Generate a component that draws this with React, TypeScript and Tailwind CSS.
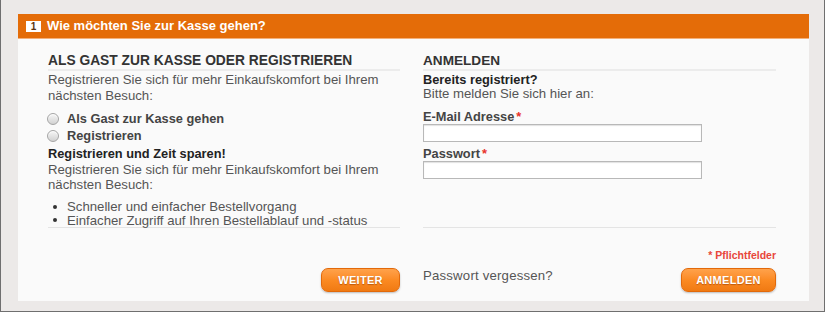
import React from "react";

const bullets = ["Schneller und einfacher Bestellvorgang", "Einfacher Zugriff auf Ihren Bestellablauf und -status"];

function Radio({ label }: { label: string }) {
  return (
    <label className="flex items-center h-[17px]">
      <span className="w-[12px] h-[12px] rounded-full border border-[#a5a5a5] bg-gradient-to-b from-[#f6f6f6] to-[#d2d2d2] shadow-[inset_0_1px_1px_rgba(255,255,255,0.8)] -ml-[1px]" />
      <span className="ml-[8px] font-bold text-[#444] text-[12.8px]">{label}</span>
    </label>
  );
}

function OrangeButton({ label, width }: { label: string; width: string }) {
  return (
    <button
      className={`${width} h-[24px] rounded-[7px] border border-[#e2690a] bg-gradient-to-b from-[#ffa24a] via-[#fb8a22] to-[#f07a12] text-white text-[11px] font-bold tracking-[0.3px] shadow-[0_1px_2px_rgba(0,0,0,0.25)] [text-shadow:0_1px_1px_rgba(150,60,0,0.6)]`}
    >
      {label}
    </button>
  );
}

export default function App() {
  return (
    <div
      className="w-[825px] h-[312px] bg-[#ece9e8] border-x border-b border-[#6f6f6f] pl-[17px] pt-[14px]"
      style={{ fontFamily: '"Liberation Sans", Arial, sans-serif' }}
    >
      <div className="w-[791px] h-[287px] bg-[#fafafa] flex flex-col">
        <div className="h-[25px] bg-[#e46c08] border-b border-[#f3b07a] flex items-center pl-[8px]">
          <span className="w-[15px] h-[11px] bg-white text-[#5a3410] text-[10px] font-bold leading-[11px] flex items-center justify-center">
            1
          </span>
          <span className="ml-[6px] text-white text-[13px] font-bold">Wie möchten Sie zur Kasse gehen?</span>
        </div>

        <div className="px-[30px] pt-[14px] text-[13.2px] text-[#555] leading-[16px]">
          <div className="grid grid-cols-[352px_353px] gap-x-[23px]">
            <div className="flex flex-col border-b border-[#e4e4e4]">
              <h2 className="text-[13.8px] font-bold text-[#333] leading-[15px] pb-[1px] border-b-2 border-[#ececec]">
                ALS GAST ZUR KASSE ODER REGISTRIEREN
              </h2>
              <p className="mt-[1px]">
                Registrieren Sie sich für mehr Einkaufskomfort bei Ihrem
                <br />
                nächsten Besuch:
              </p>
              <div className="mt-[6px] flex flex-col">
                <Radio label="Als Gast zur Kasse gehen" />
                <Radio label="Registrieren" />
              </div>
              <p className="mt-[2px] font-bold text-[#222] text-[12.8px]">Registrieren und Zeit sparen!</p>
              <p className="leading-[15px]">
                Registrieren Sie sich für mehr Einkaufskomfort bei Ihrem
                <br />
                nächsten Besuch:
              </p>
              <ul className="mt-[8px] leading-[13.5px]">
                {bullets.map((b) => (
                  <li key={b} className="flex items-center">
                    <span className="w-[4px] h-[4px] rounded-full bg-[#333] ml-[5px] mr-[10px]" />
                    {b}
                  </li>
                ))}
              </ul>
            </div>

            <div className="flex flex-col border-b border-[#e4e4e4]">
              <h2 className="text-[13.6px] font-bold text-[#333] leading-[15px] pb-[1px] border-b-2 border-[#ececec]">
                ANMELDEN
              </h2>
              <p className="mt-[2px] leading-[14px] font-bold text-[#222] text-[12.8px]">Bereits registriert?</p>
              <p className="leading-[14px]">Bitte melden Sie sich hier an:</p>
              <label className="mt-[9px] leading-[14px] font-bold text-[#444] text-[12.8px]">
                E-Mail Adresse<span className="text-[#e8322a] ml-[2px]">*</span>
              </label>
              <input
                type="text"
                className="w-[279px] h-[18px] bg-white border border-[#b8b8b8] shadow-[inset_0_1px_1px_rgba(0,0,0,0.12)] outline-none"
              />
              <label className="mt-[5px] leading-[14px] font-bold text-[#444] text-[12.8px]">
                Passwort<span className="text-[#e8322a] ml-[2px]">*</span>
              </label>
              <input
                type="password"
                className="w-[279px] h-[18px] bg-white border border-[#b8b8b8] shadow-[inset_0_1px_1px_rgba(0,0,0,0.12)] outline-none"
              />
            </div>
          </div>

          <div className="grid grid-cols-[352px_353px] gap-x-[23px]">
            <div className="flex justify-end pt-[40px]">
              <OrangeButton label="WEITER" width="w-[79px]" />
            </div>
            <div className="flex flex-col">
              <div className="text-right text-[10.5px] font-bold text-[#e8463a] leading-[12px] mt-[21px]">* Pflichtfelder</div>
              <div className="flex justify-between items-start mt-[7px]">
                <a className="mt-[1px] leading-[14px] text-[#555] text-[13.2px] tracking-[0.2px]">Passwort vergessen?</a>
                <OrangeButton label="ANMELDEN" width="w-[95px]" />
              </div>
            </div>
          </div>
        </div>
      </div>
    </div>
  );
}
